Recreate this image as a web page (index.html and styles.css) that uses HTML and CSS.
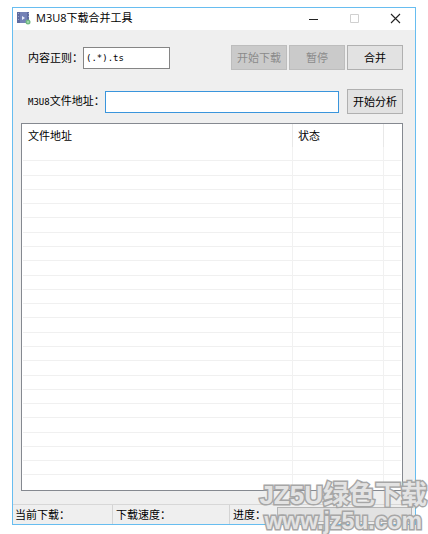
FILE: index.html
```html
<!DOCTYPE html>
<html lang="zh-CN">
<head>
<meta charset="utf-8">
<meta name="viewport" content="width=device-width, initial-scale=1">
<title>M3U8下载合并工具</title>
<link rel="stylesheet" href="styles.css">
</head>
<body>
<main class="window">
  <header class="titlebar">
    <svg class="app-icon" viewBox="0 0 14 14" aria-hidden="true">
      <rect x="0" y="1" width="12" height="11" fill="#5f6ca0"/>
      <rect x="3" y="1" width="7" height="11" fill="#7482b6"/>
      <path d="M1 2h1v1H1zM1 5h1v1H1zM1 8h1v1H1zM11 2h1v1h-1zM11 5h1v1h-1z" fill="#98a3c8"/>
      <path d="M5 5l3 2-3 2z" fill="#e8edfa"/>
      <circle cx="11" cy="11" r="2.5" fill="#72b982"/>
      <path d="M10 11h2M11 10v2" stroke="#a9dfb5" stroke-width="1"/>
    </svg>
    <h1 class="title">M3U8下载合并工具</h1>
    <div class="controls">
      <button class="control" type="button" aria-label="最小化"><svg viewBox="0 0 11 11"><path d="M1 6.5h9" stroke="#222"/></svg></button>
      <button class="control" type="button" aria-label="最大化" disabled><svg viewBox="0 0 11 11"><path d="M1.5 1.5h8v8h-8z" fill="none" stroke="#d0d0d0"/></svg></button>
      <button class="control" type="button" aria-label="关闭"><svg viewBox="0 0 11 11"><path d="M1 1l9 9M10 1l-9 9" stroke="#222" stroke-width="1.1"/></svg></button>
    </div>
  </header>
  <form class="form">
    <div class="row">
      <label for="pattern">内容正则：</label>
      <input class="field pattern" id="pattern" type="text" value="(.*).ts">
      <div class="actions">
        <button class="button" type="button" disabled>开始下载</button>
        <button class="button" type="button" disabled>暂停</button>
        <button class="button" type="button">合并</button>
      </div>
    </div>
    <div class="row">
      <label for="address"><span class="narrow">M3U8</span>文件地址：</label>
      <input class="field address" id="address" type="text">
      <button class="button" type="button">开始分析</button>
    </div>
  </form>
  <div class="list">
    <table class="files">
      <colgroup><col><col class="col-state"><col class="col-rest"></colgroup>
      <thead><tr><th>文件地址</th><th>状态</th><th></th></tr></thead>
      <tbody>
        <tr><td></td><td></td><td></td></tr>
        <tr><td></td><td></td><td></td></tr>
        <tr><td></td><td></td><td></td></tr>
        <tr><td></td><td></td><td></td></tr>
        <tr><td></td><td></td><td></td></tr>
        <tr><td></td><td></td><td></td></tr>

        <tr><td></td><td></td><td></td></tr>
        <tr><td></td><td></td><td></td></tr>
        <tr><td></td><td></td><td></td></tr>
        <tr><td></td><td></td><td></td></tr>
        <tr><td></td><td></td><td></td></tr>
        <tr><td></td><td></td><td></td></tr>

        <tr><td></td><td></td><td></td></tr>
        <tr><td></td><td></td><td></td></tr>
        <tr><td></td><td></td><td></td></tr>
        <tr><td></td><td></td><td></td></tr>
        <tr><td></td><td></td><td></td></tr>
        <tr><td></td><td></td><td></td></tr>

        <tr><td></td><td></td><td></td></tr>
        <tr><td></td><td></td><td></td></tr>
        <tr><td></td><td></td><td></td></tr>
        <tr><td></td><td></td><td></td></tr>
        <tr><td></td><td></td><td></td></tr>
        <tr><td></td><td></td><td></td></tr>
      </tbody>
    </table>
  </div>
  <footer class="status">
    <span class="cell cell-current">当前下载：</span>
    <span class="cell cell-speed">下载速度：</span>
    <label class="cell cell-progress" for="progress">进度：</label>
    <progress class="progress" id="progress" value="0" max="100"></progress>
  </footer>
</main>
<div class="watermark">
  <span class="mark-name">JZ5U绿色下载</span>
  <span class="mark-site">www.jz5u.com</span>
</div>
</body>
</html>
```
FILE: styles.css
```css
* { box-sizing: border-box; }

body {
  position: relative;
  margin: 0;
  min-height: 100vh;
  padding: 7px 12px 9px;
  display: flex;
  background: #fff;
  color: #000;
  font: 11px/16px "Liberation Sans", "Noto Sans CJK SC", sans-serif;
}

button, input { font: inherit; color: inherit; }

.window {
  flex: 1;
  min-width: 0;
  display: flex;
  flex-direction: column;
  border: 1px solid #67bdf0;
  background: #efefef;
}

.titlebar {
  display: flex;
  align-items: center;
  height: 22px;
  padding: 0 8px 2px 4px;
  background: #fff;
}

.app-icon { width: 14px; height: 14px; }

.title {
  flex: 1;
  margin: 0 0 0 5px;
  font: 11px/16px "Open Sans", "Noto Sans CJK SC", sans-serif;
}

.controls { display: flex; gap: 17px; }

.control {
  width: 24px;
  height: 18px;
  padding: 0;
  border: 0;
  background: none;
  display: grid;
  place-items: center;
}

.control svg { width: 11px; height: 11px; }

.form {
  display: flex;
  flex-direction: column;
  gap: 19px;
  padding: 15px 12px 9px 15px;
}

.row {
  display: flex;
  align-items: center;
  height: 25px;
}

.row label { white-space: nowrap; }

.narrow { font: 9px/16px "DejaVu Sans Mono", monospace; }

.field {
  height: 22px;
  padding: 0 2px;
  border: 1px solid #858585;
  background: #fff;
  border-radius: 0;
  outline: 0;
  font: 9px/16px "DejaVu Sans Mono", monospace;
}

.pattern { width: 87px; }

.address {
  flex: 1;
  min-width: 0;
  margin-right: 8px;
  border-color: #3a95dc;
}

.actions {
  display: flex;
  gap: 2px;
  margin-left: auto;
}

.button {
  width: 56px;
  height: 25px;
  padding: 0;
  border: 1px solid #b0b0b0;
  background: #e2e2e2;
  white-space: nowrap;
}

.button:disabled {
  border-color: #bdbdbd;
  background: #cacaca;
  color: #8a8a8a;
}

.list {
  flex: 1;
  display: flex;
  margin: 0 12px 0 8px;
  border: 1px solid #858990;
  background: #fff;
  padding: 0 1px;
}

.files {
  width: 100%;
  table-layout: fixed;
  border-collapse: separate;
  border-spacing: 0;
}

.col-state { width: 91px; }
.col-rest { width: 17px; }

.files th {
  height: 23px;
  padding: 1px 5px 0;
  border-right: 1px solid #e8e8e8;
  font-weight: 400;
  text-align: left;
}

.files td {
  height: 14px;
  padding: 0;
  border-right: 1px solid #f1f1f1;
  border-bottom: 1px solid #f0f0f0;
}

.files th:last-child, .files td:last-child { border-right: 0; }
.files tr:last-child td { border-bottom: 0; }

.status {
  display: flex;
  height: 20px;
  margin-top: 13px;
  border-top: 1px solid #d7d7d7;
}

.cell {
  padding: 2px 3px 0;
  border-right: 1px solid #d4d4d4;
  white-space: nowrap;
}

.cell-current { width: 100px; padding-left: 2px; }
.cell-speed { width: 117px; }
.cell-progress { width: 46px; border-right: 0; }

.progress {
  flex: 1;
  min-width: 0;
  height: 15px;
  margin: 2px 3px 0 1px;
  appearance: none;
  border: 1px solid #b5b5b5;
  background: #e2e2e2;
}

.progress::-webkit-progress-bar { background: #e2e2e2; }
.progress::-webkit-progress-value { background: #06b025; }

.watermark {
  position: absolute;
  right: 1px;
  bottom: 0;
  display: flex;
  flex-direction: column;
  align-items: center;
  color: #e3e3e3;
  -webkit-text-stroke: 3px #a6a6a6;
  paint-order: stroke fill;
  font-weight: 700;
  white-space: nowrap;
  pointer-events: none;
}

.mark-name { font-size: 26px; line-height: 28px; }
.mark-site { font-size: 23px; line-height: 25px; }
```
